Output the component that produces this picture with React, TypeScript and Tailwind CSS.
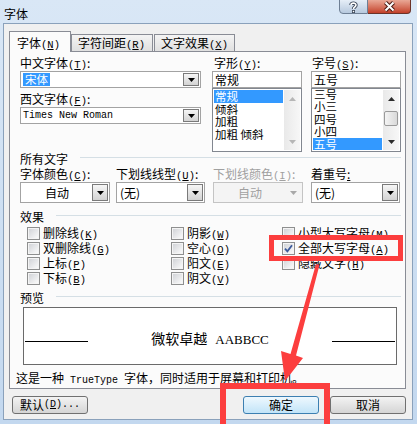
import React from "react";

const MONO = "font-['Liberation_Mono',monospace]";
const ITEM = "h-[12.5px] overflow-hidden whitespace-nowrap pl-px text-[11.5px] leading-[12.5px]";

function Acc({ t, k, tail = ":" }: { t: string; k: string; tail?: string }) {
  return (
    <>
      {t}
      <span className={MONO + " text-[10.5px]"}>
        (<span className="underline">{k}</span>)
      </span>
      {tail}
    </>
  );
}

function Caret({ up, color = "#000" }: { up?: boolean; color?: string }) {
  return (
    <svg width="7" height="4" viewBox="0 0 7 4">
      <path d={up ? "M0 4h7L3.5 0z" : "M0 0h7L3.5 4z"} fill={color} />
    </svg>
  );
}

function Combo({
  className = "",
  children,
  disabled,
}: {
  className?: string;
  children?: React.ReactNode;
  disabled?: boolean;
}) {
  return (
    <div
      className={
        "flex items-stretch border p-px " +
        (disabled ? "border-[#c4c4c4] bg-[#f4f4f4] text-[#a0a0a0] " : "border-[#a3a3a3] bg-white ") +
        className
      }
    >
      <div className="flex flex-1 items-center whitespace-nowrap">{children}</div>
      {disabled ? (
        <div className="flex w-[16px] items-center justify-center">
          <Caret color="#a8a8a8" />
        </div>
      ) : (
        <div className="flex w-[16px] items-center justify-center border border-[#7a7a7a] bg-linear-to-b from-[#f6f6f6] to-[#d3d3d3]">
          <Caret />
        </div>
      )}
    </div>
  );
}

function VScroll({ active }: { active?: boolean }) {
  const c = active ? "#2b2b2b" : "#b6b6b6";
  return (
    <div className="my-px mr-px flex w-[16px] flex-col bg-linear-to-r from-[#e9e9e9] to-[#f7f7f7]">
      <div className="flex h-[17px] items-center justify-center">
        <Caret up color={c} />
      </div>
      <div className="flex-1">
        {active && (
          <div className="mx-px mt-[4px] h-[15px] rounded-[2px] border border-[#9a9a9a] bg-linear-to-r from-[#f4f4f4] to-[#d9d9d9]" />
        )}
      </div>
      <div className="flex h-[17px] items-center justify-center">
        <Caret color={c} />
      </div>
    </div>
  );
}

function Check({ label, k, checked }: { label: string; k: string; checked?: boolean }) {
  return (
    <div className="flex h-[15px] items-center">
      <div className="h-[13px] w-[13px] border border-[#8e8f8f]">
        <div className="flex h-full w-full items-center justify-center border border-[#f4f4f4] bg-linear-to-br from-[#d2d4d8] to-[#fafafa]">
          {checked && (
            <svg width="9" height="9" viewBox="0 0 9 9">
              <path d="M1 4.6L3.4 7.4L8 1.2" stroke="#3c5a9a" strokeWidth="1.8" fill="none" />
            </svg>
          )}
        </div>
      </div>
      <span className="ml-[3px] whitespace-nowrap">
        <Acc t={label} k={k} tail="" />
      </span>
    </div>
  );
}

function Btn({ children, className = "", def }: { children: React.ReactNode; className?: string; def?: boolean }) {
  return (
    <div
      className={
        "flex h-[18px] w-[76px] items-center justify-center rounded-[3px] border " +
        (def
          ? "border-[#3c7fb1] bg-linear-to-b from-[#eef8fe] to-[#c2e4f8] "
          : "border-[#707070] bg-linear-to-b from-[#f3f3f3] to-[#d5d5d5] ") +
        className
      }
    >
      {children}
    </div>
  );
}

function Section({ title, gap = "ml-[12px]" }: { title: string; gap?: string }) {
  return (
    <div className="flex h-[14px] items-start">
      <span>{title}</span>
      <div className={"mt-[5px] h-px flex-1 bg-[#d5dfe5] " + gap} />
    </div>
  );
}

export default function App() {
  return (
    <div className="relative h-[424px] w-[417px] overflow-hidden bg-linear-to-b from-[#d9e7f6] to-[#c3d8ef] font-['Noto_Sans_CJK_SC',sans-serif] text-[12px] leading-[14px] text-black">
      {/* title bar */}
      <div className="flex h-[23px] items-start justify-between">
        <span className="pl-[4px] pt-[7px]">字体</span>
        <div className="mr-[6px] flex">
          <div className="-mt-px flex h-[15px] w-[29px] items-center justify-center rounded-bl-[4px] border border-[#6e7f95] bg-linear-to-b from-[#e6eef7] to-[#b7c9de]">
            <svg width="9" height="12" viewBox="0 0 9 12">
              <path d="M2 4C2 1.6 7 1.4 7 4C7 5.8 4.5 6 4.5 8" stroke="#3b4658" strokeWidth="3.4" fill="none" />
              <path d="M2 4C2 1.6 7 1.4 7 4C7 5.8 4.5 6 4.5 8" stroke="#fff" strokeWidth="1.6" fill="none" />
              <rect x="3" y="9" width="3" height="3" fill="#3b4658" />
              <rect x="3.8" y="9.8" width="1.4" height="1.4" fill="#fff" />
            </svg>
          </div>
          <div className="-mt-px flex h-[15px] w-[43px] items-center justify-center rounded-br-[4px] border border-l-0 border-[#6b3329] bg-linear-to-b from-[#e9a796] to-[#c23f29]">
            <svg width="13" height="11" viewBox="0 0 13 11">
              <path d="M2.5 1.5L10.5 9.5M10.5 1.5L2.5 9.5" stroke="#4a1c15" strokeWidth="4" />
              <path d="M2.5 1.5L10.5 9.5M10.5 1.5L2.5 9.5" stroke="#fff" strokeWidth="2" />
            </svg>
          </div>
        </div>
      </div>

      {/* dialog body */}
      <div className="ml-[3px] h-[397px] w-[410px] border border-[#8aa1bb] bg-[#f0f0f0]">
        {/* tabs */}
        <div className="flex h-[28px] items-end pl-[5px]">
          <div className="relative z-10 h-[21px] w-[62px] border border-b-0 border-[#898c95] bg-[#fbfbfb] pl-[7px] pt-[4px]">
            <Acc t="字体" k="N" tail="" />
          </div>
          <div className="h-[18px] w-[82px] border border-[#898c95] bg-linear-to-b from-[#f4f4f4] to-[#e0e0e0] pl-[6px] pt-[1px]">
            <Acc t="字符间距" k="R" tail="" />
          </div>
          <div className="ml-px h-[18px] w-[81px] border border-[#898c95] bg-linear-to-b from-[#f4f4f4] to-[#e0e0e0] pl-[6px] pt-[1px]">
            <Acc t="文字效果" k="X" tail="" />
          </div>
        </div>

        {/* tab page */}
        <div className="-mt-px ml-[5px] h-[338px] w-[397px] border border-[#898c95] bg-[#fbfbfb] pl-[10px] pr-[4px] pt-[4px]">
          {/* fonts and lists */}
          <div className="flex h-[96px]">
            <div className="w-[181px]">
              <div className="h-[14px]">
                <Acc t="中文字体" k="T" />
              </div>
              <Combo className="mt-px h-[17px]">
                <span className="ml-px bg-[#3399ff] px-[2px] text-[11.5px] leading-[13px] text-white">宋体</span>
              </Combo>
              <div className="mt-[4px] h-[14px]">
                <Acc t="西文字体" k="F" />
              </div>
              <Combo className="mt-px h-[17px]">
                <span className={MONO + " pl-px text-[10px]"}>Times New Roman</span>
              </Combo>
            </div>

            <div className="ml-[11px] w-[90px]">
              <div className="h-[14px] pl-[2px]">
                <Acc t="字形" k="Y" />
              </div>
              <div className="mt-px h-[17px] border border-[#a3a3a3] bg-white pl-[2px] leading-[15px]">常规</div>
              <div className="flex h-[64px] border border-[#828790] bg-white">
                <div className="mr-px flex-1 overflow-hidden pl-px pt-px">
                  <div className={ITEM + " bg-[#3399ff] text-white"}>常规</div>
                  <div className={ITEM}>倾斜</div>
                  <div className={ITEM}>加粗</div>
                  <div className={ITEM}>加粗 倾斜</div>
                </div>
                <VScroll />
              </div>
            </div>

            <div className="ml-[9px] w-[90px]">
              <div className="h-[14px] pl-px">
                <Acc t="字号" k="S" />
              </div>
              <div className="mt-px h-[17px] border border-[#a3a3a3] bg-white pl-[2px] leading-[15px]">五号</div>
              <div className="flex h-[64px] border border-[#828790] bg-white">
                <div className="mr-px flex-1 overflow-hidden pl-px">
                  <div className={ITEM + " -mt-[1.5px]"}>三号</div>
                  <div className={ITEM}>小三</div>
                  <div className={ITEM}>四号</div>
                  <div className={ITEM}>小四</div>
                  <div className={ITEM + " bg-[#3399ff] text-white"}>五号</div>
                </div>
                <VScroll active />
              </div>
            </div>
          </div>

          {/* all text */}
          <Section title="所有文字" />
          <div className="mt-px flex">
            <div className="w-[90px]">
              <div className="h-[14px] whitespace-nowrap">
                <Acc t="字体颜色" k="C" />
              </div>
              <Combo className="mt-px h-[21px]">
                <span className="flex-1 text-center">自动</span>
              </Combo>
            </div>
            <div className="ml-[6px] w-[89px]">
              <div className="h-[14px] whitespace-nowrap">
                <Acc t="下划线线型" k="U" />
              </div>
              <Combo className="mt-px h-[21px]">
                <span className="pl-[2px]">(无)</span>
              </Combo>
            </div>
            <div className="ml-[8px] w-[90px]">
              <div className="h-[14px] whitespace-nowrap text-[#a0a0a0]">
                <Acc t="下划线颜色" k="I" />
              </div>
              <Combo className="mt-px h-[21px]" disabled>
                <span className="flex-1 text-center">自动</span>
              </Combo>
            </div>
            <div className="ml-[8px] w-[89px]">
              <div className="h-[14px] whitespace-nowrap">
                着重号<span className="underline">:</span>
              </div>
              <Combo className="mt-px h-[21px]">
                <span className="pl-[2px]">(无)</span>
              </Combo>
            </div>
          </div>

          {/* effects */}
          <div className="mt-[7px]">
            <Section title="效果" />
          </div>
          <div className="ml-[7px] mt-[2px] grid grid-cols-[144px_111px_1fr]">
            <Check label="删除线" k="K" />
            <Check label="阴影" k="W" />
            <Check label="小型大写字母" k="M" />
            <Check label="双删除线" k="G" />
            <Check label="空心" k="O" />
            <Check label="全部大写字母" k="A" checked />
            <Check label="上标" k="P" />
            <Check label="阳文" k="E" />
            <Check label="隐藏文字" k="H" />
            <Check label="下标" k="B" />
            <Check label="阴文" k="V" />
            <div />
          </div>

          {/* preview */}
          <div className="mt-[5px]">
            <Section title="预览" />
          </div>
          <div className="ml-[3px] mt-[2px] flex h-[58px] w-[374px] items-start border border-[#6a6a6a] bg-white">
            <div className="ml-px mt-[33px] h-px w-[63px] bg-black" />
            <div className="mt-[21px] flex-1 whitespace-nowrap text-center leading-[18px]">
              <span className="text-[14px]">微软卓越</span>
              <span className="ml-[8px] font-['Liberation_Serif',serif] text-[13px]">AABBCC</span>
            </div>
            <div className="mr-px mt-[33px] h-px w-[63px] bg-black" />
          </div>
          <div className="-ml-[4px] mt-[6px] h-[14px] whitespace-nowrap">
            这是一种<span className={MONO + " text-[10px]"}> TrueType </span>字体，同时适用于屏幕和打印机。
          </div>
        </div>

        {/* buttons */}
        <div className="mt-[7px] flex">
          <Btn className="ml-[8px]">
            默认<span className={MONO + " text-[10px]"}>(<span className="underline">D</span>)...</span>
          </Btn>
          <Btn className="ml-[155px]" def>
            确定
          </Btn>
          <Btn className="ml-[11px]">取消</Btn>
        </div>
      </div>

      {/* red annotations */}
      <div className="pointer-events-none absolute left-[269px] top-[235px] h-[26px] w-[134px] border-[5px] border-[#fc3e3e]" />
      <div className="pointer-events-none absolute left-[220px] top-[383px] h-[50px] w-[110px] border-[6px] border-[#fc3e3e]" />
      <svg className="pointer-events-none absolute left-0 top-0" width="417" height="424" viewBox="0 0 417 424">
        <polygon points="316,264 319.5,265 296,355.5 303,358 285,381 281,351 290.5,354" fill="#fc3e3e" />
      </svg>
    </div>
  );
}
